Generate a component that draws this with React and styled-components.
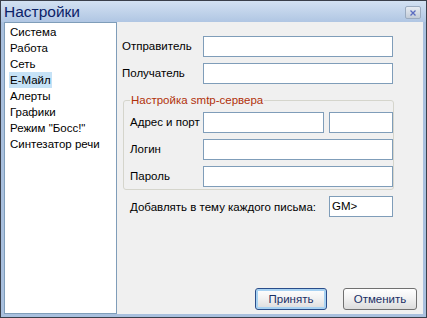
import React from "react";
import styled, { createGlobalStyle } from "styled-components";

const GlobalStyle = createGlobalStyle`
  html, body {
    margin: 0;
    padding: 0;
    background: #ffffff;
  }
  body {
    font-family: "Liberation Sans", Arial, sans-serif;
    font-size: 11px;
  }
`;

const Window = styled.div`
  width: 427px;
  height: 318px;
  box-sizing: border-box;
  border: 1px solid #3a3f4a;
  background: #a9c0de;
  display: flex;
  flex-direction: column;
`;

const TitleBar = styled.div`
  height: 21px;
  display: flex;
  align-items: center;
  justify-content: space-between;
  padding: 0 5px 0 3px;
  background: linear-gradient(#d3e1f2, #b0c6e3);
`;

const Title = styled.span`
  color: #0c2268;
  font-size: 15.5px;
  margin-top: 1px;
`;

const CloseButton = styled.div`
  width: 14px;
  height: 11px;
  border: 1px solid #9aaabf;
  border-radius: 2px;
  background: linear-gradient(#e6ebf2, #c3ccd8);
  display: flex;
  align-items: center;
  justify-content: center;
  margin-top: 2px;
`;

const Body = styled.div`
  flex: 1;
  display: flex;
  padding: 0 3px 3px 3px;
  min-height: 0;
`;

const Sidebar = styled.ul`
  width: 113px;
  box-sizing: border-box;
  margin: 0;
  padding: 1px 0 0 4px;
  list-style: none;
  background: #ffffff;
  border: 1px solid #7f9db9;
`;

const SideRow = styled.li`
  height: 16px;
`;

const SideItem = styled.span`
  display: inline-block;
  height: 16px;
  line-height: 16px;
  padding: 0 1px;
  font-size: 11.5px;
  color: #000;
  background: ${(p) => (p.$active ? "#c6e2f6" : "transparent")};
`;

const Panel = styled.div`
  flex: 1;
  background: #f0f0f0;
  display: flex;
  flex-direction: column;
  padding: 13px 30px 3px 5px;
`;

const FieldRow = styled.div`
  display: grid;
  grid-template-columns: ${(p) => p.$cols || "81px 1fr"};
  align-items: center;
  height: 22px;
  margin-bottom: ${(p) => p.$gap ?? 5}px;
`;

const Label = styled.span`
  font-size: 11.5px;
  color: #000;
`;

const Input = styled.div`
  height: 21px;
  box-sizing: border-box;
  background: #fff;
  border: 1px solid #7f9db9;
  font-size: 11.5px;
  line-height: 19px;
  padding-left: 2px;
  width: ${(p) => (p.$w ? `${p.$w}px` : "auto")};
  justify-self: ${(p) => (p.$end ? "end" : "stretch")};
`;

const Group = styled.fieldset`
  margin: 5px -1px 0 1px;
  padding: 5px 0 2px 6px;
  border: 1px solid #d5d5cc;
  border-radius: 3px;
`;

const Legend = styled.legend`
  padding: 0 1px;
  margin-left: 0;
  color: #b0300a;
  font-size: 11.5px;
`;

const SubjectRow = styled.div`
  display: flex;
  align-items: center;
  justify-content: space-between;
  margin: 6px 0 0 8px;
`;

const Spacer = styled.div`
  flex: 1;
`;

const Buttons = styled.div`
  display: flex;
  justify-content: flex-end;
  gap: 16px;
  margin-right: -24px;
  margin-bottom: 1px;
`;

const Button = styled.div`
  width: ${(p) => p.$w}px;
  height: 22px;
  box-sizing: border-box;
  border: 1px solid ${(p) => (p.$default ? "#2a4d8a" : "#707070")};
  border-radius: 3px;
  background: linear-gradient(#ffffff, #f2f2f2 45%, #dcdcdc);
  box-shadow: ${(p) => (p.$default ? "inset 0 0 0 2px #a8d2f2" : "none")};
  display: flex;
  align-items: center;
  justify-content: center;
  font-size: 11.5px;
  color: #1a2f66;
`;

const items = [
  "Система",
  "Работа",
  "Сеть",
  "E-Майл",
  "Алерты",
  "Графики",
  'Режим "Босс!"',
  "Синтезатор речи",
];

export default function App() {
  return (
    <>
      <GlobalStyle />
      <Window>
        <TitleBar>
          <Title>Настройки</Title>
          <CloseButton>
            <svg width="6" height="6" viewBox="0 0 6 6">
              <path d="M0.5 0.5 L5.5 5.5 M5.5 0.5 L0.5 5.5" stroke="#5a6bc0" strokeWidth="1.3" />
            </svg>
          </CloseButton>
        </TitleBar>
        <Body>
          <Sidebar>
            {items.map((it) => (
              <SideRow key={it}>
                <SideItem $active={it === "E-Майл"}>{it}</SideItem>
              </SideRow>
            ))}
          </Sidebar>
          <Panel>
            <FieldRow>
              <Label>Отправитель</Label>
              <Input />
            </FieldRow>
            <FieldRow>
              <Label>Получатель</Label>
              <Input />
            </FieldRow>
            <Group>
              <Legend>Настройка smtp-сервера</Legend>
              <FieldRow $cols="73px 121px 1fr" $gap={5}>
                <Label>Адрес и порт</Label>
                <Input />
                <Input $w={64} $end />
              </FieldRow>
              <FieldRow $cols="73px 1fr" $gap={5}>
                <Label>Логин</Label>
                <Input />
              </FieldRow>
              <FieldRow $cols="73px 1fr" $gap={0}>
                <Label>Пароль</Label>
                <Input />
              </FieldRow>
            </Group>
            <SubjectRow>
              <Label>Добавлять в тему каждого письма:</Label>
              <Input $w={64}>GM&gt;</Input>
            </SubjectRow>
            <Spacer />
            <Buttons>
              <Button $default $w={72}>Принять</Button>
              <Button $w={74}>Отменить</Button>
            </Buttons>
          </Panel>
        </Body>
      </Window>
    </>
  );
}
